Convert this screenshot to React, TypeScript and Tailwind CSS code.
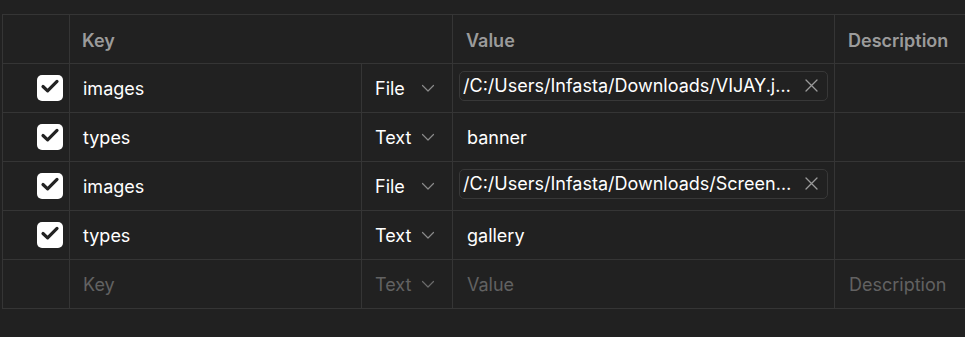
import { Fragment } from "react";

type Row = {
  key: string;
  type: "File" | "Text";
  value: string;
};

const ROWS: Row[] = [
  { key: "images", type: "File", value: "/C:/Users/Infasta/Downloads/VIJAY.j…" },
  { key: "types", type: "Text", value: "banner" },
  { key: "images", type: "File", value: "/C:/Users/Infasta/Downloads/Screen…" },
  { key: "types", type: "Text", value: "gallery" },
];

const cell = "h-[49px] border-r border-b border-[#353535] flex items-center";

function Check() {
  return (
    <div className="flex h-[26px] w-[26px] items-center justify-center rounded-[5px] bg-white">
      <svg width="26" height="26" viewBox="0 0 26 26" fill="none">
        <path d="M6 11.5 10.6 15.8 20 6.4" stroke="#222" strokeWidth="3.2" strokeLinecap="round" strokeLinejoin="round" />
      </svg>
    </div>
  );
}

function Chevron({ dim }: { dim?: boolean }) {
  return (
    <svg width="14" height="14" viewBox="0 0 14 14" fill="none" className="ml-auto mr-[17px] -mt-[1px]">
      <path d="M1.5 4.5 7 10 12.5 4.5" stroke={dim ? "#6b6b6b" : "#8a8a8a"} strokeWidth="1.2" strokeLinecap="round" strokeLinejoin="round" />
    </svg>
  );
}

function Clear() {
  return (
    <svg width="13" height="13" viewBox="0 0 13 13" fill="none" className="ml-auto mr-[9px] shrink-0">
      <path d="M1 1 12 12M12 1 1 12" stroke="#9a9a9a" strokeWidth="1.3" strokeLinecap="round" />
    </svg>
  );
}

export default function App() {
  return (
    <div className="h-[337px] w-[965px] overflow-hidden bg-[#212121] pl-[2px] pt-[14px] text-[18px]" style={{ fontFamily: "Inter, 'Noto Sans', sans-serif" }}>
      <div className="grid w-[1000px] grid-cols-[67px_292px_91px_382px_1fr] border-l border-t border-[#353535]">
        {/* header */}
        <div className={cell} />
        <div className={`${cell} col-span-2 pl-[12px] pt-[2px] font-semibold text-[#9b9b9b]`}>Key</div>
        <div className={`${cell} pl-[13px] pt-[2px] font-semibold text-[#9b9b9b]`}>Value</div>
        <div className={`${cell} pl-[13px] pt-[2px] font-semibold text-[#9b9b9b]`}>Description</div>

        {ROWS.map((r, i) => (
          <Fragment key={i}>
            <div className={`${cell} justify-end pr-[6px]`}>
              <Check />
            </div>
            <div className={`${cell} pl-[13px] pt-[1px] text-white`}>{r.key}</div>
            <div className={`${cell} pl-[13px] pt-[1px] text-white`}>
              {r.type}
              <Chevron />
            </div>
            <div className={`${cell} px-[6px]`}>
              {r.type === "File" ? (
                <div className="mb-[5px] flex h-[30px] w-full items-center rounded-[5px] border border-[#383838] pl-[3px]">
                  <span className="truncate text-white">{r.value}</span>
                  <Clear />
                </div>
              ) : (
                <span className="pl-[8px] pt-[1px] text-white">{r.value}</span>
              )}
            </div>
            <div className={cell} />
          </Fragment>
        ))}

        {/* empty row */}
        <div className={cell} />
        <div className={`${cell} pl-[13px] pt-[1px] text-[#626262]`}>Key</div>
        <div className={`${cell} pl-[13px] pt-[1px] text-[#626262]`}>
          Text
          <Chevron dim />
        </div>
        <div className={`${cell} pl-[14px] pt-[1px] text-[#626262]`}>Value</div>
        <div className={`${cell} pl-[14px] pt-[1px] text-[#626262]`}>Description</div>
      </div>
    </div>
  );
}
